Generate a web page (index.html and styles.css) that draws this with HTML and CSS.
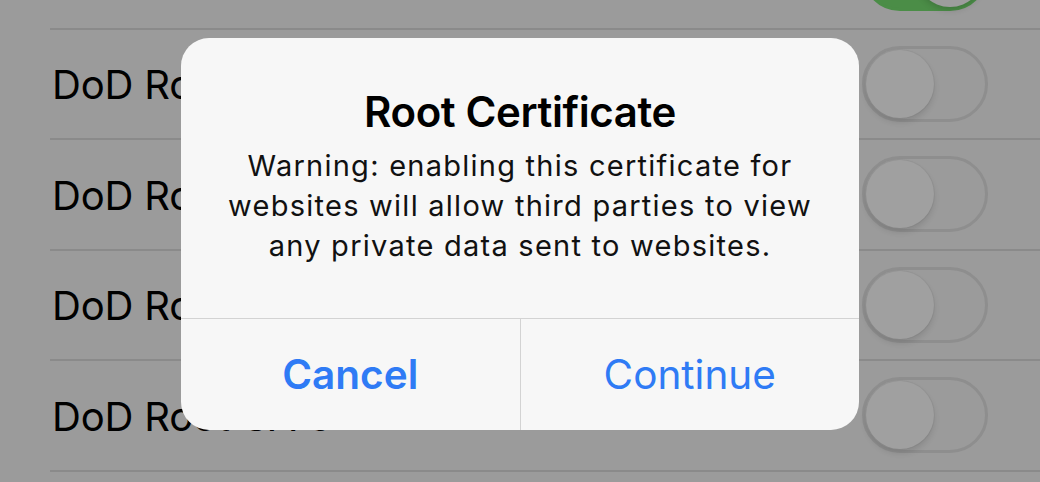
FILE: index.html
```html
<!DOCTYPE html>
<html>
<head>
<meta charset="utf-8">
<link rel="stylesheet" href="styles.css">
</head>
<body>
<div class="screen">
  <ul class="list">
    <li class="row"><span class="label"></span><span class="toggle on"><span class="knob"></span></span></li>
    <li class="row"><span class="label">DoD Root CA 3</span><span class="toggle"><span class="knob"></span></span></li>
    <li class="row"><span class="label">DoD Root CA 4</span><span class="toggle"><span class="knob"></span></span></li>
    <li class="row"><span class="label">DoD Root CA 5</span><span class="toggle"><span class="knob"></span></span></li>
    <li class="row"><span class="label">DoD Root CA 6</span><span class="toggle"><span class="knob"></span></span></li>
    <li class="row"><span class="label"></span></li>
  </ul>
  <div class="alert">
    <div class="alert-body">
      <h1 class="alert-title">Root Certificate</h1>
      <p class="alert-msg">Warning: enabling this certificate for<br>websites will allow third parties to view<br>any private data sent to websites.</p>
    </div>
    <div class="alert-actions">
      <button class="btn btn-cancel">Cancel</button>
      <button class="btn btn-continue">Continue</button>
    </div>
  </div>
</div>
</body>
</html>
```
FILE: styles.css
```css
* { box-sizing: border-box; }
html, body {
  margin: 0;
  padding: 0;
  width: 1040px;
  height: 482px;
  overflow: hidden;
  background: #9b9b9b;
  font-family: "Inter", "Noto Sans", sans-serif;
}
.screen {
  position: relative;
  width: 1040px;
  height: 482px;
  overflow: hidden;
}
.list {
  list-style: none;
  margin: -81px 0 0 50px;
  padding: 0;
}
.row {
  height: 110.5px;
  border-bottom: 2px solid #8a8a8a;
  display: flex;
  align-items: center;
  justify-content: space-between;
  padding: 2px 52px 0 2px;
}
.label {
  font-size: 40px;
  color: #000;
  letter-spacing: -0.2px;
  white-space: nowrap;
}
.toggle {
  width: 126px;
  height: 76px;
  margin-top: -2px;
  border-radius: 38px;
  border: 3px solid #8e8e8e;
  background: #9b9b9b;
  display: flex;
  align-items: center;
  padding: 0 1px;
}
.knob {
  width: 68px;
  height: 68px;
  border-radius: 50%;
  background: #a0a0a0;
  box-shadow: 0 4px 6px rgba(0,0,0,0.12), 0 0 0 1px rgba(0,0,0,0.04);
}
.toggle.on {
  background: #4b8d47;
  border-color: #4b8d47;
  justify-content: flex-end;
}
.toggle.on .knob {
  background: #9d9d9d;
  box-shadow: 0 3px 6px rgba(0,0,0,0.15);
}
.alert {
  position: absolute;
  left: 181px;
  top: 38px;
  width: 678px;
  height: 392px;
  border-radius: 28px;
  background: #f7f7f7;
  display: flex;
  flex-direction: column;
  overflow: hidden;
}
.alert-body {
  height: 281px;
  display: flex;
  flex-direction: column;
  align-items: center;
  padding: 49px 20px 0;
  border-bottom: 1.5px solid #d3d3d3;
}
.alert-title {
  margin: 0;
  font-size: 42px;
  font-weight: 600;
  line-height: 50px;
  color: #000;
  letter-spacing: -0.4px;
}
.alert-msg {
  margin: 9px 0 0;
  font-size: 29px;
  line-height: 40px;
  text-align: center;
  color: #111;
  letter-spacing: 1.25px;
  white-space: nowrap;
}
.alert-actions {
  flex: 1;
  display: flex;
}
.btn {
  flex: 1;
  border: 0;
  background: transparent;
  font-family: inherit;
  font-size: 40.5px;
  color: #2f7bf5;
  padding: 0;
}
.btn-cancel {
  font-weight: 600;
  border-right: 1.5px solid #d3d3d3;
}
.btn-continue {
  font-weight: 400;
}
```
